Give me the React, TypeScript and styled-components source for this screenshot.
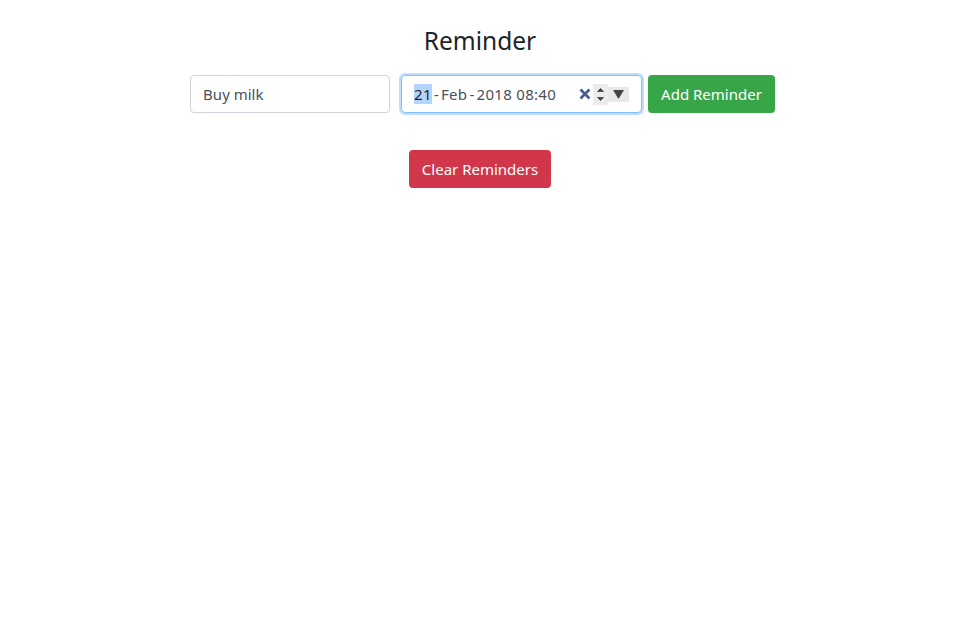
import React from "react";
import styled, { createGlobalStyle } from "styled-components";

const Global = createGlobalStyle`
  html, body { margin: 0; padding: 0; background: #fff; }
  body { font-family: "Noto Sans", "Open Sans", sans-serif; color: #212529; font-size: 16px; }
`;

const Page = styled.div`
  display: flex;
  flex-direction: column;
  align-items: center;
  padding-top: 24px;
`;

const Title = styled.h3`
  margin: 0 0 17px;
  font-weight: 400;
  font-size: 24.5px;
  line-height: 34px;
  color: #212529;
`;

const Form = styled.div`
  display: flex;
  align-items: center;
  margin-left: 5px;
`;

const TextInput = styled.input`
  box-sizing: border-box;
  width: 200px;
  height: 38px;
  padding: 6px 12px;
  border: 1px solid #ced4da;
  border-radius: 4px;
  font-family: inherit;
  font-size: 15px;
  color: #495057;
  margin-right: 11px;
  outline: none;
`;

const DateBox = styled.div`
  box-sizing: border-box;
  width: 241px;
  height: 38px;
  display: flex;
  align-items: center;
  padding: 0 12px 0 12px;
  border: 1px solid #80bdff;
  border-radius: 4px;
  box-shadow: 0 0 0 2px rgba(0, 123, 255, 0.25);
  font-size: 15px;
  color: #495057;
  margin-right: 6px;
`;

const DateText = styled.span`
  flex: 1;
  white-space: nowrap;
  letter-spacing: 0.3px;
`;

const Sel = styled.span`
  background: #b3d4fc;
  color: #212529;
`;

const Dash = styled.span`
  padding: 0 2px;
`;

const Clear = styled.span`
  display: flex;
  width: 14px;
  justify-content: center;
  margin-right: 1px;
`;

const Spin = styled.span`
  display: flex;
  flex-direction: column;
  align-items: center;
  justify-content: center;
  width: 15px;
  height: 21px;
  background: #ececec;
`;

const Drop = styled.span`
  display: flex;
  align-items: center;
  justify-content: center;
  width: 21px;
  height: 15px;
  background: #e9e9e9;
`;

const Button = styled.button<{ $bg: string }>`
  box-sizing: border-box;
  height: 38px;
  padding: 0 13px;
  border: none;
  border-radius: 4px;
  background: ${(p) => p.$bg};
  color: #fff;
  font-family: inherit;
  font-size: 15px;
  cursor: pointer;
`;

const ClearRow = styled.div`
  margin-top: 37px;
`;

export default function App() {
  return (
    <>
      <Global />
      <Page>
        <Title>Reminder</Title>
        <Form>
          <TextInput defaultValue="Buy milk" />
          <DateBox>
            <DateText>
              <Sel>21</Sel>
              <Dash>-</Dash>Feb<Dash>-</Dash>2018 08:40
            </DateText>
            <Clear>
              <svg width="12" height="12" viewBox="0 0 12 12">
                <path d="M1.5 1.5 L10.5 10.5 M10.5 1.5 L1.5 10.5" stroke="#4b5a92" strokeWidth="2.8" strokeLinecap="butt" />
              </svg>
            </Clear>
            <Spin>
              <svg width="9" height="17" viewBox="0 0 9 17">
                <path d="M1.5 5.5 L4.5 2.5 L7.5 5.5 Z" fill="#444" stroke="#444" strokeWidth="0.8" />
                <path d="M1.5 11.5 L4.5 14.5 L7.5 11.5 Z" fill="#444" stroke="#444" strokeWidth="0.8" />
              </svg>
            </Spin>
            <Drop>
              <svg width="11" height="9" viewBox="0 0 11 9">
                <path d="M0 0 L11 0 L5.5 9 Z" fill="#444" />
              </svg>
            </Drop>
          </DateBox>
          <Button $bg="#37a648">Add Reminder</Button>
        </Form>
        <ClearRow>
          <Button $bg="#d2364a">Clear Reminders</Button>
        </ClearRow>
      </Page>
    </>
  );
}
